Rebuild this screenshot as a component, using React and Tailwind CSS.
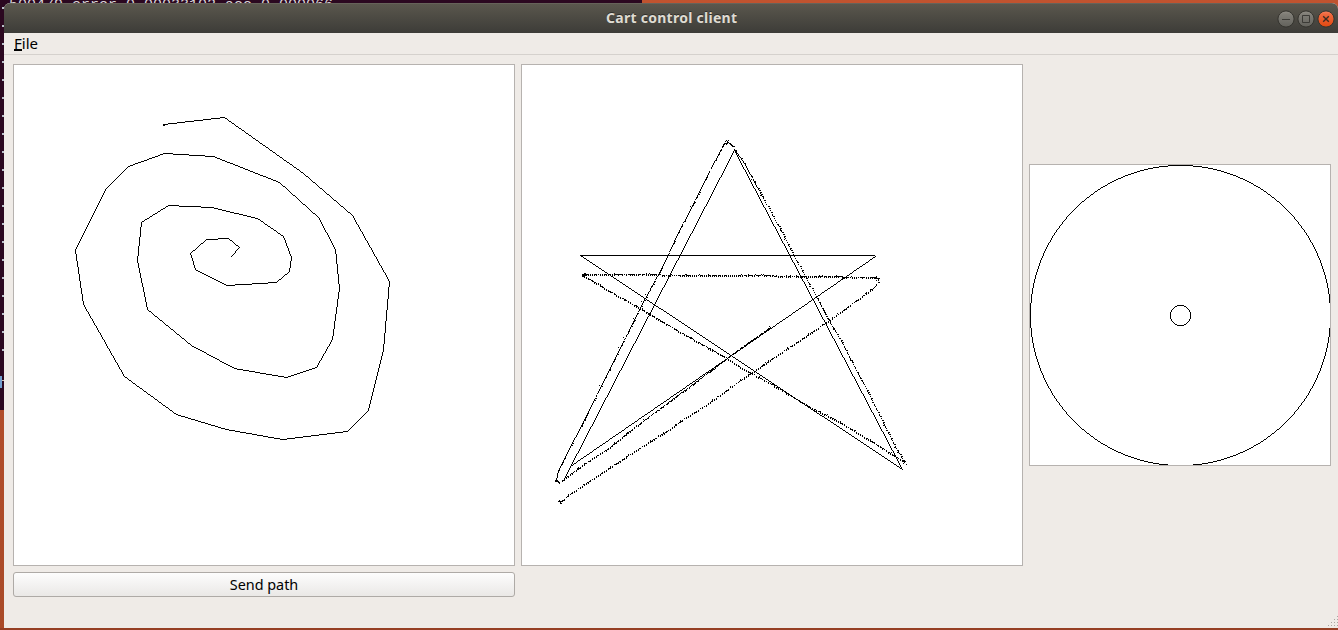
import React from "react";

const SPIRAL = [
  [163, 125], [164, 125], [163, 124], [224, 117], [303, 173], [352, 215], [389, 281], [383, 349],
  [368, 410], [347, 431], [282, 439], [226, 429], [176, 414], [124, 376], [83, 304],
  [75, 250], [105, 189], [128, 166], [164, 153], [213, 156], [279, 182], [318, 217],
  [335, 249], [339, 288], [332, 339], [316, 367], [286, 377], [234, 368], [191, 345],
  [147, 309], [137, 260], [141, 222], [168, 205], [211, 207], [257, 218], [283, 236],
  [291, 257], [289, 271], [276, 282], [226, 285], [195, 269], [190, 253], [206, 239],
  [228, 238], [239, 247], [231, 256],
];

const STAR_EDGES = [
  [[570, 466], [875, 256]],
  [[874, 255], [580, 255]],
  [[580, 255], [902, 469]],
  [[902, 469], [734, 150]],
  [[734, 150], [563, 480]],
];

// Measured positions of the cart; "dense" runs are drawn almost without gaps.
const TRACE = [
  { points: [[560, 502], [571, 493], [607, 469], [627, 456], [647, 443], [670, 429], [683, 419], [707, 404], [739, 381], [752, 372], [783, 351], [813, 331], [828, 321], [843, 310], [873, 288]] },
  { dense: true, points: [[873, 288], [878, 282], [878, 278], [875, 277]] },
  { points: [[876, 277], [739, 275], [583, 274]] },
  { points: [[582, 275], [588, 278], [608, 290], [640, 308], [670, 326], [707, 347], [727, 358], [739, 366], [773, 385], [807, 405], [840, 422], [873, 442], [903, 461]] },
  { points: [[905, 463], [893, 443], [873, 402], [840, 339], [828, 319], [817, 298], [793, 254], [778, 225], [757, 187]] },
  { dense: true, points: [[757, 187], [744, 163], [735, 150], [732, 145], [728, 142], [724, 143], [706, 177], [690, 210], [678, 232], [665, 261], [645, 298], [623, 341], [609, 369], [582, 424], [568, 450], [558, 470], [556, 480], [559, 482]] },
  { points: [[562, 480], [577, 469], [594, 457], [607, 449], [627, 433], [640, 423]] },
  { dense: true, points: [[640, 423], [655, 412], [668, 402], [683, 391], [710, 371], [740, 348], [770, 327]] },
];

const BLOBS = [
  [559, 500], [559, 501], [560, 501], [561, 501], [560, 503], [561, 503],
  [558, 501], [562, 501], [903, 460], [904, 461], [904, 462], [905, 461],
  [903, 463], [906, 464], [902, 461], [903, 461], [904, 460], [582, 274],
  [583, 275], [584, 275], [585, 275], [583, 276], [585, 273], [556, 479],
  [557, 480], [557, 481], [558, 481], [725, 141], [727, 141], [726, 140],
  [725, 143], [726, 143], [730, 143], [733, 146], [769, 326], [770, 328],
  [555, 481], [555, 480],
];

function line([x0, y0], [x1, y1]) {
  const out = [];
  const n = Math.max(Math.abs(x1 - x0), Math.abs(y1 - y0), 1);
  for (let i = 0; i <= n; i++) {
    out.push([Math.round(x0 + ((x1 - x0) * i) / n), Math.round(y0 + ((y1 - y0) * i) / n)]);
  }
  return out;
}

function polyline(points) {
  return points.slice(1).flatMap((p, i) => line(points[i], p));
}

function circle(cx, cy, r) {
  const out = [];
  for (let d = 0; d <= r * 0.7072; d++) {
    const e = Math.round(Math.sqrt(r * r - d * d));
    [[d, e], [e, d]].forEach(([a, b]) => {
      out.push([cx + a, cy + b], [cx - a, cy + b], [cx + a, cy - b], [cx - a, cy - b]);
    });
  }
  return out;
}

function trace() {
  let seed = 7;
  const rand = () => {
    seed = (seed * 16807) % 2147483647;
    return seed / 2147483647;
  };
  const out = [...BLOBS];
  TRACE.forEach(({ dense, points }) => {
    points.slice(1).forEach((p, k) => {
      const from = points[k];
      const steep = Math.abs(p[1] - from[1]) > Math.abs(p[0] - from[0]);
      line(from, p).forEach(([x, y]) => {
        const step = steep ? y : x;
        const put = (o) => out.push(steep ? [x + o, y] : [x, y + o]);
        if (dense) {
          if (rand() < 0.93) put(0);
          if (rand() < (steep ? 0.14 : 0.4)) put(1);
          if (rand() < 0.03) put(-2);
        } else if (step % 2 === 0) {
          put(0);
          if (rand() < (steep ? 0.45 : 0.8)) put(1);
          if (rand() < 0.06) put(-1);
        } else {
          if (rand() < 0.42) put(0);
          if (rand() < 0.08) put(-1);
        }
      });
    });
  });
  return out;
}

const toPath = (pixels) => pixels.map(([x, y]) => `M${x} ${y}h1v1h-1z`).join("");

const spiralPath = toPath(polyline(SPIRAL));
const starPath = toPath([...STAR_EDGES.flatMap(([a, b]) => line(a, b)), ...trace()]);
const gaugePath = toPath([...circle(150, 150, 150), ...circle(150, 150, 10)]);

function Plot({ viewBox, d, className }) {
  return (
    <div className={`shrink-0 border border-[#b6b2af] bg-white ${className}`}>
      <svg viewBox={viewBox} className="block h-full w-full" shapeRendering="crispEdges">
        <path d={d} fill="#000" />
      </svg>
    </div>
  );
}

function WindowButton({ kind }) {
  const close = kind === "close";
  return (
    <svg width="18" height="18" viewBox="0 0 18 18" className="block">
      <defs>
        <linearGradient id={`fill-${kind}`} x1="0" y1="0" x2="0" y2="1">
          <stop offset="0" stopColor={close ? "#f58562" : "#928f87"} />
          <stop offset="0.2" stopColor={close ? "#f0693f" : "#807e77"} />
          <stop offset="1" stopColor={close ? "#e0480f" : "#62615b"} />
        </linearGradient>
      </defs>
      <circle cx="9" cy="9" r="8.1" fill={`url(#fill-${kind})`} stroke="#34332e" strokeWidth="1" />
      {kind === "minimize" && <path d="M5 9.5h8" stroke="#3c3b37" />}
      {kind === "maximize" && <path d="M5.5 5.5h7v7h-7z" fill="none" stroke="#3c3b37" />}
      {close && <path d="M6.2 6.2l5.6 5.6M11.8 6.2l-5.6 5.6" stroke="#3c2b22" strokeWidth="1.4" />}
    </svg>
  );
}

function Desktop() {
  return (
    <div className="absolute inset-0 bg-linear-to-b from-[#c0532f] to-[#a94a28]">
      <div className="relative h-[410px] w-[642px] overflow-hidden bg-[#2b0820]">
        <div className="absolute top-[-3px] left-[9px] font-['Liberation_Mono',monospace] text-[15px] leading-[18px] whitespace-pre text-[#d8d4d6]">
          500479 error 0.00033102 acc 0.000066
        </div>
        <div className="flex w-1 flex-col items-end gap-4 pt-[7px]">
          {Array.from({ length: 20 }, (_, i) => (
            <span key={i} className="h-0.5 w-0.5 shrink-0 bg-[#b9bfca]" />
          ))}
        </div>
        <svg viewBox="0 0 4 12" className="absolute top-[376px] left-0 h-3 w-1" shapeRendering="crispEdges">
          <path d="M0 0h2v12H0z" fill="#729fcf" />
          <path d="M2 4h2v1H2z" fill="#d8c4b4" />
        </svg>
      </div>
      <div className="absolute inset-x-0 bottom-0 h-0.5 bg-[#963f24]" />
    </div>
  );
}

export default function App() {
  return (
    <div className="relative h-[630px] w-[1338px] overflow-hidden font-['Noto_Sans',sans-serif]">
      <Desktop />
      <div className="relative flex h-full flex-col pt-[3px] pb-0.5 pl-1">
        <div className="flex min-h-0 flex-1 flex-col overflow-hidden rounded-t-md bg-[#efebe7]">
          <header className="grid h-[30px] shrink-0 grid-cols-[1fr_auto_1fr] items-center border-t border-[#66635a] bg-linear-to-b from-[#5a574d] to-[#3d3c38]">
            <span />
            <h1 className="w-[132px] pb-0.5 pl-px text-center text-[14px] leading-5 font-bold tracking-[0.27px] whitespace-nowrap text-[#dfdbd2] [text-shadow:0_-1px_0_#302f2b]">
              Cart control client
            </h1>
            <div className="flex justify-end gap-0.5 pr-[3px]">
              <WindowButton kind="minimize" />
              <WindowButton kind="maximize" />
              <WindowButton kind="close" />
            </div>
          </header>
          <nav className="flex h-[22px] shrink-0 items-center border-b border-[#d5d1cd] pb-0.5 pl-[10px] text-[15px] leading-5 text-black">
            <span>
              <span className="inline-block h-[18px] border-b-2 border-black leading-5">F</span>ile
            </span>
          </nav>
          <main className="flex min-h-0 flex-1 items-start gap-[6px] px-[9px] pt-[9px]">
            <div className="flex shrink-0 flex-col gap-[6px]">
              <Plot viewBox="14 65 500 500" d={spiralPath} className="h-[502px] w-[502px]" />
              <button className="h-[25px] w-[502px] rounded-[3px] border border-[#aeaaa6] bg-linear-to-b from-[#fdfdfd] to-[#eae8e6] text-[14.4px] leading-[22px] text-black">
                Send path
              </button>
            </div>
            <Plot viewBox="522 65 500 500" d={starPath} className="h-[502px] w-[502px]" />
            <div className="flex h-[502px] items-center">
              <Plot viewBox="0 0 300 300" d={gaugePath} className="h-[302px] w-[302px]" />
            </div>
          </main>
          <footer className="flex shrink-0 justify-end">
            <svg width="11" height="12" viewBox="0 0 11 12" shapeRendering="crispEdges">
              <path
                d="M10 0h1v1h-1zM7 3h1v1H7zM10 3h1v1h-1zM4 6h1v1H4zM7 6h1v1H7zM10 6h1v1h-1zM1 9h1v1H1zM4 9h1v1H4zM7 9h1v1H7zM10 9h1v1h-1z"
                fill="#aaa6a2"
              />
            </svg>
          </footer>
        </div>
      </div>
    </div>
  );
}
